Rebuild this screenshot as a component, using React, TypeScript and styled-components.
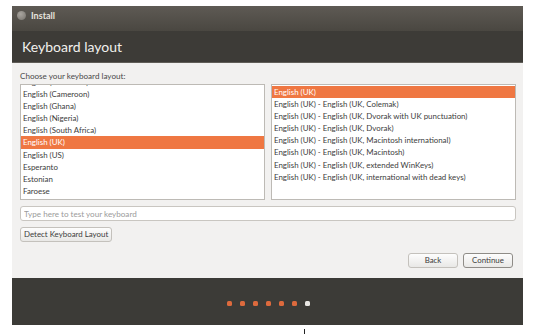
import React from 'react';
import styled, { createGlobalStyle } from 'styled-components';

const Global = createGlobalStyle`
  html, body { margin: 0; padding: 0; background: #ffffff; }
  body { font-family: Lato, "Liberation Sans", sans-serif; }
  * { box-sizing: border-box; }
`;

const Page = styled.div`
  position: relative;
  width: 545px;
  height: 334px;
  overflow: hidden;
  background: #ffffff;
  padding: 6px 0 0 12px;
`;

const Window = styled.div`
  width: 511px;
  display: flex;
  flex-direction: column;
`;

const TitleBar = styled.div`
  height: 25px;
  background: linear-gradient(#5e5a54, #4a4741);
  display: flex;
  align-items: flex-start;
  gap: 5px;
  padding: 5px 0 0 5px;
`;

const CloseDot = styled.span`
  width: 9px;
  height: 9px;
  border-radius: 50%;
  background: radial-gradient(circle at 40% 35%, #a9a59f, #74716b);
`;

const Title = styled.span`
  font-size: 9px;
  font-weight: 700;
  color: #e6e3de;
  line-height: 10px;
`;

const Header = styled.div`
  height: 32px;
  background: #3d3b37;
  border-bottom: 1px solid #605d58;
  display: flex;
  align-items: center;
  padding: 0 0 0 10px;
`;

const HeaderTitle = styled.h1`
  margin: 0;
  font-size: 14px;
  font-weight: 400;
  color: #f2f0ed;
  padding-bottom: 1px;
`;

const Body = styled.div`
  height: 215px;
  background: #f2f1f0;
  padding: 8px 7px 0 8px;
  display: flex;
  flex-direction: column;
`;

const Label = styled.div`
  font-size: 8.1px;
  line-height: 10px;
  color: #4a4a4a;
  margin-bottom: 3px;
`;

const Lists = styled.div`
  display: grid;
  grid-template-columns: 245px 245px;
  gap: 6px;
  height: 116px;
`;

const ListBox = styled.div`
  background: #ffffff;
  border: 1px solid #bdbab5;
  overflow: hidden;
  padding-top: 1px;
`;

const ListInner = styled.div<{ $scroll: number }>`
  transform: translateY(${(p) => -p.$scroll}px);
`;

const Row = styled.div<{ $selected?: boolean }>`
  height: 12.1px;
  line-height: 12px;
  font-size: 7.9px;
  padding-left: 2px;
  white-space: nowrap;
  color: ${(p) => (p.$selected ? '#ffffff' : '#3c3c3c')};
  background: ${(p) => (p.$selected ? '#ef7742' : 'transparent')};
`;

const TestInput = styled.input`
  margin-top: 6px;
  height: 15px;
  width: 496px;
  border: 1px solid #c9c6c1;
  border-radius: 3px;
  background: #ffffff;
  font-family: Lato, "Liberation Sans", sans-serif;
  font-size: 8.1px;
  padding: 0 3px;
  color: #3c3c3c;
  outline: none;
  &::placeholder { color: #9b9b9b; }
`;

const Button = styled.button<{ $default?: boolean; $w?: number }>`
  height: 15px;
  width: ${(p) => (p.$w ? `${p.$w}px` : 'auto')};
  padding: 0 3px;
  border: 1px solid ${(p) => (p.$default ? '#8f8c87' : '#c4c1bc')};
  border-radius: 3px;
  background: linear-gradient(#fdfdfd, #e9e8e6);
  font-family: Lato, "Liberation Sans", sans-serif;
  font-size: 7.9px;
  color: #3c3c3c;
  line-height: 13px;
  cursor: default;
`;

const DetectRow = styled.div`
  margin-top: 6px;
  display: flex;
`;

const NavRow = styled.div`
  margin-top: 11px;
  display: flex;
  justify-content: flex-end;
  gap: 5px;
  padding-right: 3px;
`;

const Footer = styled.div`
  height: 47px;
  background: #3c3b37;
  display: flex;
  justify-content: center;
  align-items: flex-start;
  gap: 8px;
  padding: 23px 0 0 2px;
`;

const Dot = styled.span<{ $active?: boolean }>`
  width: 5px;
  height: 5px;
  border-radius: 1.5px;
  background: ${(p) => (p.$active ? '#e9e7e3' : '#dd6a3d')};
`;

const Caret = styled.div`
  position: absolute;
  left: 304px;
  top: 329px;
  width: 1px;
  height: 5px;
  background: #222;
`;

const leftItems = [
  'English (Australian)',
  'English (Cameroon)',
  'English (Ghana)',
  'English (Nigeria)',
  'English (South Africa)',
  'English (UK)',
  'English (US)',
  'Esperanto',
  'Estonian',
  'Faroese',
];

const rightItems = [
  'English (UK)',
  'English (UK) - English (UK, Colemak)',
  'English (UK) - English (UK, Dvorak with UK punctuation)',
  'English (UK) - English (UK, Dvorak)',
  'English (UK) - English (UK, Macintosh international)',
  'English (UK) - English (UK, Macintosh)',
  'English (UK) - English (UK, extended WinKeys)',
  'English (UK) - English (UK, international with dead keys)',
];

export default function App() {
  return (
    <>
      <Global />
      <Page>
        <Window>
          <TitleBar>
            <CloseDot />
            <Title>Install</Title>
          </TitleBar>
          <Header>
            <HeaderTitle>Keyboard layout</HeaderTitle>
          </Header>
          <Body>
            <Label>Choose your keyboard layout:</Label>
            <Lists>
              <ListBox>
                <ListInner $scroll={10}>
                  {leftItems.map((t) => (
                    <Row key={t} $selected={t === 'English (UK)'}>{t}</Row>
                  ))}
                </ListInner>
              </ListBox>
              <ListBox>
                <ListInner $scroll={0}>
                  {rightItems.map((t, i) => (
                    <Row key={t} $selected={i === 0}>{t}</Row>
                  ))}
                </ListInner>
              </ListBox>
            </Lists>
            <TestInput placeholder="Type here to test your keyboard" />
            <DetectRow>
              <Button>Detect Keyboard Layout</Button>
            </DetectRow>
            <NavRow>
              <Button $w={50}>Back</Button>
              <Button $w={50} $default>Continue</Button>
            </NavRow>
          </Body>
          <Footer>
            {[0, 1, 2, 3, 4, 5].map((i) => (
              <Dot key={i} />
            ))}
            <Dot $active />
          </Footer>
        </Window>
        <Caret />
      </Page>
    </>
  );
}
